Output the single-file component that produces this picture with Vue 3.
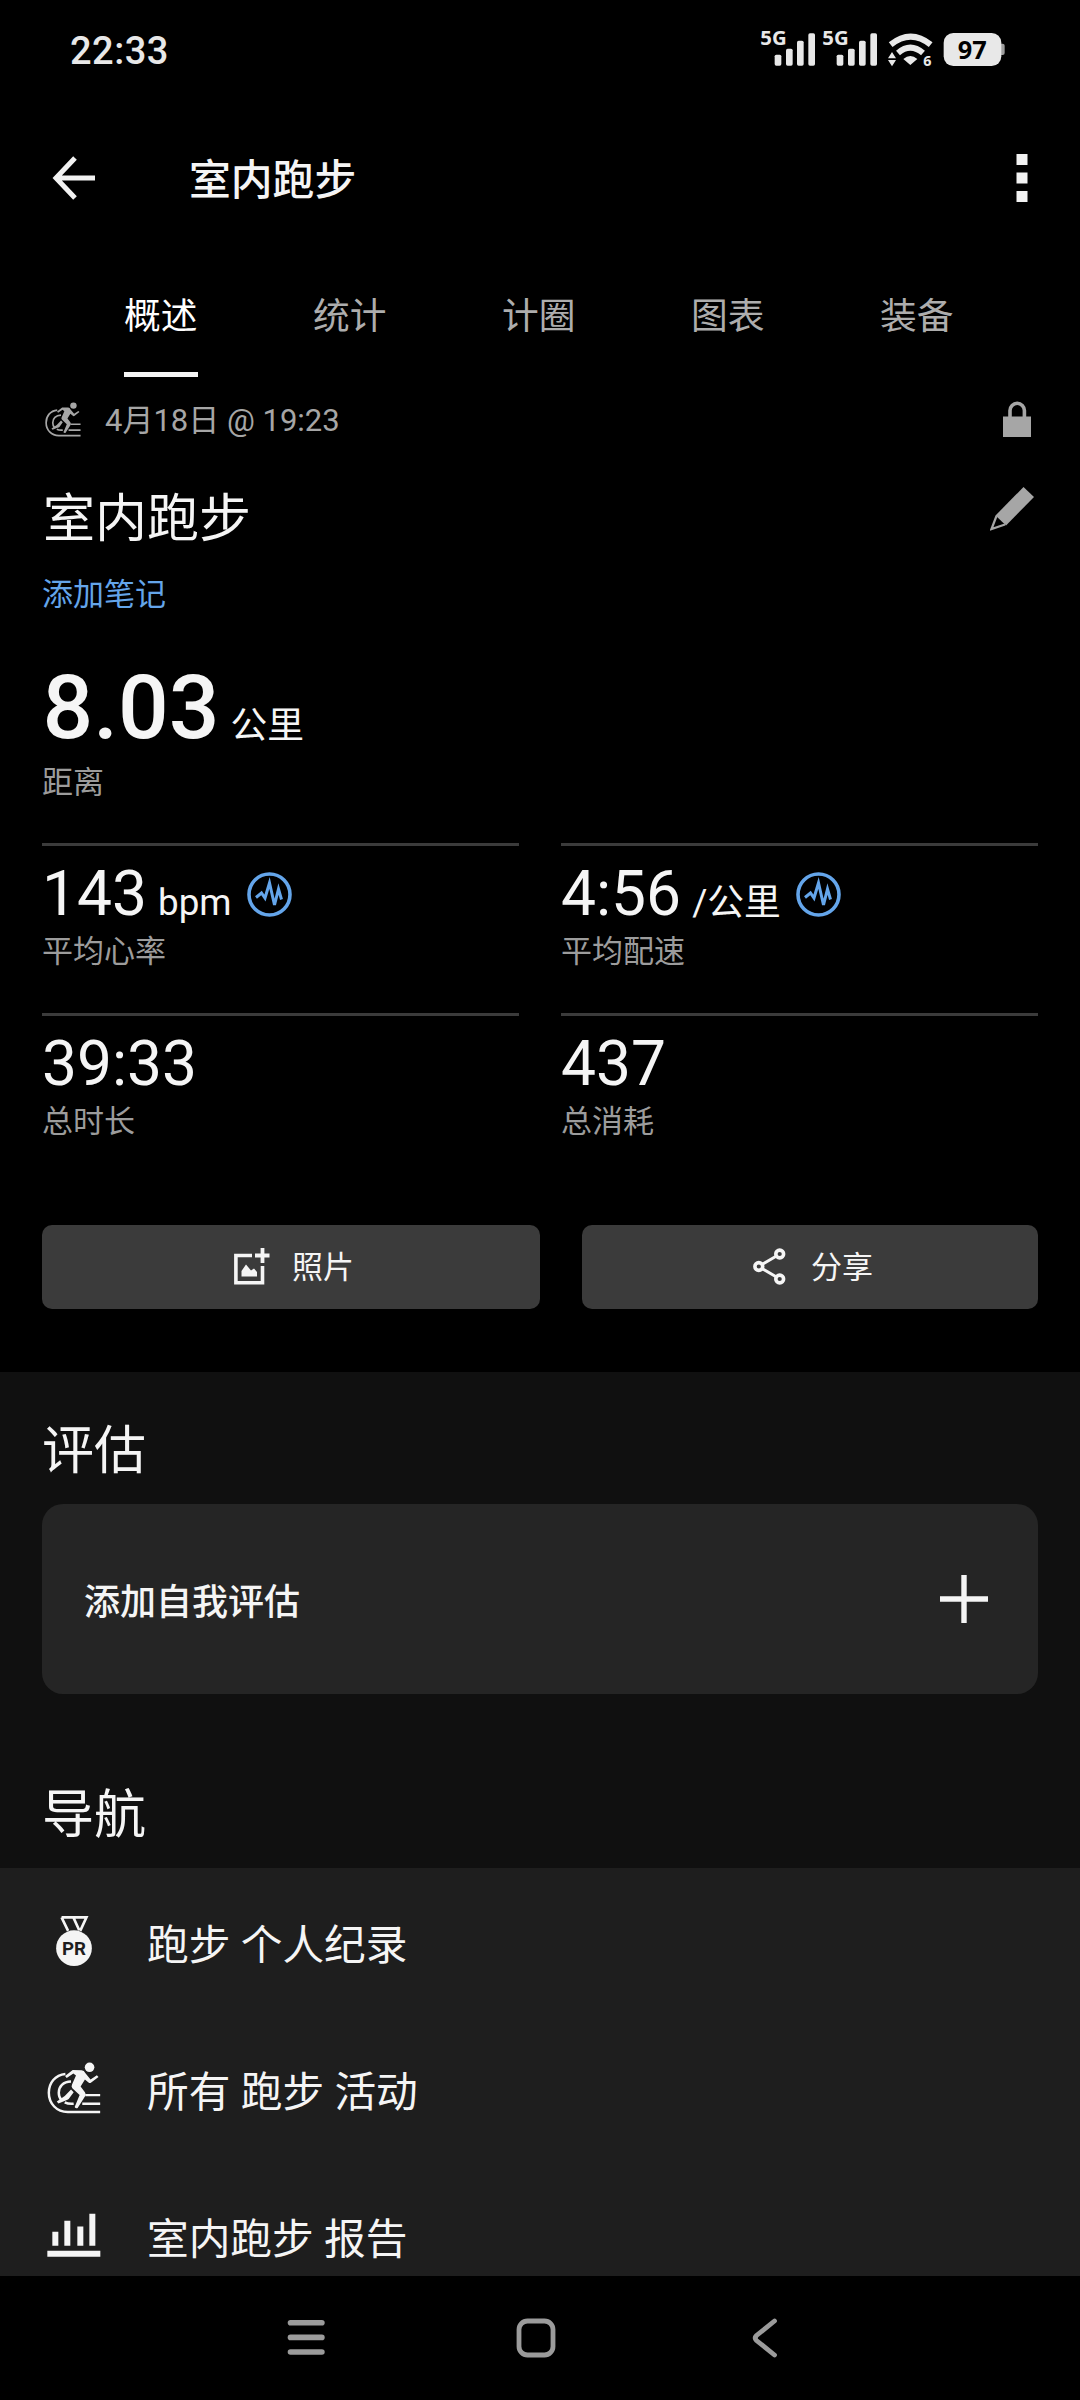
<script setup>
const tabs = ['概述', '统计', '计圈', '图表', '装备']
const stats = [
  { value: '143', unit: 'bpm', label: '平均心率', chart: true },
  { value: '4:56', unit: '/公里', label: '平均配速', chart: true },
  { value: '39:33', unit: '', label: '总时长', chart: false },
  { value: '437', unit: '', label: '总消耗', chart: false },
]
const links = [
  { icon: 'medal', text: '跑步 个人纪录' },
  { icon: 'runner', text: '所有 跑步 活动' },
  { icon: 'bars', text: '室内跑步 报告' },
]
</script>

<template>
  <div class="screen">
    <div class="status">
      <span class="clock">22:33</span>
      <svg width="280" height="80" viewBox="0 0 840 240" fill="#e8e8e8">
        <g font-family="'Noto Sans', sans-serif" font-weight="700">
          <text x="61" y="105" font-size="58" textLength="79" lengthAdjust="spacingAndGlyphs">5G</text>
          <text x="247" y="105" font-size="58" textLength="79" lengthAdjust="spacingAndGlyphs">5G</text>
          <text x="550" y="168" font-size="43">6</text>
        </g>
        <g v-for="x in [0, 186]" :key="x" :transform="`translate(${x} 0)`">
          <rect x="104" y="134" width="20" height="33" rx="5" />
          <rect x="138" y="116" width="20" height="51" rx="5" />
          <rect x="171" y="92" width="20" height="75" rx="5" />
          <rect x="205" y="70" width="20" height="97" rx="5" />
        </g>
        <g fill="none" stroke="#e8e8e8" stroke-width="18">
          <path d="M452 104Q512 56 572 104" />
          <path d="M474 129Q511 97 549 129" />
        </g>
        <path d="M490 147Q511 129 532 147L511 165ZM444 145L456 126L468 145ZM444 150H468L456 169Z" />
        <rect x="776" y="101" width="18" height="34" rx="6" fill="#9d9d9d" />
        <rect x="611" y="69" width="173" height="99" rx="29" />
        <text x="697" y="148" text-anchor="middle" font-family="'Noto Sans', sans-serif" font-weight="700" font-size="76" fill="#000">97</text>
      </svg>
    </div>

    <header class="appbar">
      <svg class="back" width="44" height="44" viewBox="0 0 44 44" fill="none" stroke="#f2f2f2" stroke-width="5">
        <path d="M23 2L4 22L23 42M4 22H43" />
      </svg>
      <h1>室内跑步</h1>
      <svg class="more" width="12" height="48" viewBox="0 0 12 48" fill="#f2f2f2">
        <path d="M.5 0h11v11H.5zM.5 18.500h11v11H.5zM.5 37h11v11H.5z" />
      </svg>
    </header>

    <nav class="tabs">
      <a v-for="(t, i) in tabs" :key="t" :class="{ active: i === 0 }">{{ t }}</a>
    </nav>

    <main class="summary">
      <div class="date-row">
        <svg class="run-small" width="36" height="35" viewBox="50 515 162 157">
          <circle cx="178" cy="531" r="14.5" fill="currentColor" />
          <g fill="none" stroke="currentColor" stroke-width="7.5">
            <path d="M105 551C74 554 55 578 55 608C55 641 79 666 112 666H210" />
            <path d="M122 574C98 574 85 590 85 608C85 618 88 625 93 630M103 637C111 641 119 642 130 641" />
            <path d="M156 641H210M165 615H210" />
          </g>
          <path fill="currentColor" d="M104 557L127 539L154 540Q162 541 165 548L181 568L200 555L205 560L182 578Q178 580 174 576L164 568L151 589L164 606Q168 612 165 618L142 654Q136 656 133 651L148 615L126 594Q122 589 125 583L137 556L129 550L109 563Z" />
          <path fill="currentColor" d="M122 598L130 606L115 627Q112 630 106 631L84 640L79 634L103 618Z" />
        </svg>
        <span>4月18日 @ 19:23</span>
        <svg class="lock" width="28" height="36" viewBox="0 0 28 36">
          <path d="M0 15.500H28V36H0z" fill="#a6a6a6" />
          <path d="M7 17V9.500a7.200 7.200 0 0 1 14.400 0V17" fill="none" stroke="#a6a6a6" stroke-width="3.600" />
        </svg>
      </div>
      <div class="title-row">
        <h2>室内跑步</h2>
        <svg width="44" height="44" viewBox="0 0 44 44">
          <path d="M33.500 0L44 10L16 38.500L5.500 28.500Z" fill="#a6a6a6" />
          <path d="M6.500 29L1.500 42L15 37.500" fill="none" stroke="#a6a6a6" stroke-width="2.200" />
        </svg>
      </div>
      <a class="note">添加笔记</a>
      <div class="distance"><b>8.03</b><span>公里</span></div>
      <div class="label">距离</div>

      <div class="grid">
        <div v-for="s in stats" :key="s.label" class="stat">
          <div class="value">
            <b>{{ s.value }}</b><span v-if="s.unit">{{ s.unit }}</span>
            <svg v-if="s.chart" width="45" height="45" viewBox="0 0 45 45" fill="none" stroke="#64a5ea">
              <circle cx="22.500" cy="22.500" r="20.500" stroke-width="3.600" />
              <path d="M9 25.500L14.500 21L18 26L22.500 11L27.500 33L31.500 17L34.500 27.500" stroke-width="3" />
            </svg>
          </div>
          <div class="label">{{ s.label }}</div>
        </div>
      </div>

      <div class="actions">
        <button class="photo">
          <svg width="36" height="37" viewBox="0 0 36 37">
            <path d="M18 7.500H1.900V34.700H28.500V18" fill="none" stroke="#f5f5f5" stroke-width="3.600" />
            <path d="M28.500 0V15M21 7.500H35.500" stroke="#f5f5f5" stroke-width="3.800" />
            <path d="M7.500 28.500V23L12 16.500L17 22.500L20 20.500L23 24V28.500Z" fill="#f5f5f5" />
          </svg>
          <span>照片</span>
        </button>
        <button class="share">
          <svg width="33" height="37" viewBox="0 0 33 37" fill="none" stroke="#f5f5f5" stroke-width="3.600">
            <circle cx="5.800" cy="18.500" r="3.900" />
            <circle cx="26.700" cy="6" r="3.900" />
            <circle cx="26.700" cy="31" r="3.900" />
            <path d="M9 16.500L23.500 8M9 20.500L23.500 29" stroke-width="3" />
          </svg>
          <span>分享</span>
        </button>
      </div>
    </main>

    <section class="lower">
      <h3 class="first">评估</h3>
      <div class="card">
        <span>添加自我评估</span>
        <svg width="48" height="48" viewBox="0 0 48 48" stroke="#f5f5f5" stroke-width="5.400">
          <path d="M24 0V48M0 24H48" />
        </svg>
      </div>
      <h3 class="second">导航</h3>
      <ul>
        <li v-for="l in links" :key="l.icon">
          <span class="icon">
            <svg v-if="l.icon === 'medal'" class="medal" viewBox="75 73 116 158">
              <circle cx="133" cy="174" r="54.5" fill="currentColor" />
              <path d="M95 80H171L152 121M95 80L115 121M131 80L149 119" fill="none" stroke="currentColor" stroke-width="8" />
              <text x="133" y="195" text-anchor="middle" font-family="Roboto, sans-serif" font-weight="700" font-size="57" fill="#1e1e1e">PR</text>
            </svg>
            <svg v-else-if="l.icon === 'runner'" class="runner" viewBox="50 515 162 157">
              <circle cx="178" cy="531" r="14.5" fill="currentColor" />
              <g fill="none" stroke="currentColor" stroke-width="7.5">
                <path d="M105 551C74 554 55 578 55 608C55 641 79 666 112 666H210" />
                <path d="M122 574C98 574 85 590 85 608C85 618 88 625 93 630M103 637C111 641 119 642 130 641" />
                <path d="M156 641H210M165 615H210" />
              </g>
              <path fill="currentColor" d="M104 557L127 539L154 540Q162 541 165 548L181 568L200 555L205 560L182 578Q178 580 174 576L164 568L151 589L164 606Q168 612 165 618L142 654Q136 656 133 651L148 615L126 594Q122 589 125 583L137 556L129 550L109 563Z" />
              <path fill="currentColor" d="M122 598L130 606L115 627Q112 630 106 631L84 640L79 634L103 618Z" />
            </svg>
            <svg v-else class="bars" viewBox="50 970 162 134">
              <path fill="currentColor" d="M66 1026h18v42H66zM102 993h18v75h-18zM141 1010h18v58h-18zM177 972h18v96h-18zM51 1083h159v18H51z" />
            </svg>
          </span>
          <span>{{ l.text }}</span>
        </li>
      </ul>
    </section>

    <footer class="sysnav">
      <svg width="38" height="36" viewBox="0 0 38 36" fill="#9b9b9b">
        <rect x=".7" width="37" height="5.600" rx="2.800" />
        <rect x=".7" y="14.600" width="37" height="5.600" rx="2.800" />
        <rect x=".7" y="29.200" width="37" height="5.600" rx="2.800" />
      </svg>
      <svg width="40" height="40" viewBox="0 0 40 40" fill="none" stroke="#9b9b9b" stroke-width="4.800">
        <rect x="3" y="3" width="34" height="34" rx="8.500" />
      </svg>
      <svg width="26" height="40" viewBox="0 0 26 40" fill="none" stroke="#9b9b9b" stroke-width="4.800" stroke-linecap="round">
        <path d="M22.500 3L4.500 17.500Q2 20 4.500 22.500L22.500 37" />
      </svg>
    </footer>
  </div>
</template>

<style>
body { margin: 0; background: #000; }
</style>

<style scoped>
.screen {
  width: 1080px;
  height: 2400px;
  overflow: hidden;
  background: #000;
  color: #f5f5f5;
  font-family: Roboto, "Noto Sans CJK SC", sans-serif;
  font-size: 31px;
}
.screen * { box-sizing: border-box; }
svg { display: block; flex: none; }
h1, h2, h3, ul { margin: 0; padding: 0; font-weight: 400; }

.status {
  display: flex;
  align-items: center;
  justify-content: space-between;
  height: 100px;
  padding: 0 60px 0 70px;
}
.clock {
  padding-top: 2px;
  font-size: 38px;
  font-weight: 500;
  letter-spacing: .5px;
  color: #e8e8e8;
}

.appbar {
  display: flex;
  align-items: center;
  height: 158px;
  padding: 0 52px 0 52px;
}
.back { margin-bottom: 2px; }
.more { margin-bottom: 3px; }
.appbar h1 {
  flex: 1;
  margin-left: 93px;
  padding-top: 4px;
  font-size: 41.8px;
  line-height: 56px;
  font-weight: 500;
}

.tabs {
  display: flex;
  gap: 115px;
  height: 119px;
  padding-left: 124px;
}
.tabs a {
  width: 74px;
  padding-top: 37px;
  border-bottom: 5px solid transparent;
  font-size: 36.750px;
  line-height: 44px;
  color: #adadad;
}
.tabs a.active { color: #fff; border-color: #f5f5f5; }

.summary { height: 995px; padding: 0 42px; }
.date-row {
  display: flex;
  align-items: center;
  height: 84px;
  color: #a6a6a6;
}
.date-row span { padding-bottom: 3px; }
.run-small { margin: 0 24px 0 3px; }
.lock { margin: 0 7px 0 auto; }
.title-row {
  display: flex;
  justify-content: space-between;
  height: 113px;
  padding: 26px 4px 0 1px;
}
h2 { padding-top: 1px; font-size: 52px; line-height: 64px; }
.note {
  display: block;
  font-size: 31px;
  line-height: 41px;
  color: #64a5ea;
}
.distance {
  display: flex;
  align-items: flex-start;
  height: 100px;
  margin-top: 43px;
  line-height: 100px;
}
.distance b { margin-left: .5px; font-size: 89.250px; font-weight: 500; }
.distance span { margin: 18px 0 0 11px; font-size: 36.750px; }
.label {
  margin-top: 5px;
  font-size: 31px;
  line-height: 40px;
  color: #9c9c9c;
}
.grid {
  display: grid;
  grid-template-columns: 477px 477px;
  column-gap: 42px;
  margin-top: 40px;
}
.stat {
  height: 170px;
  padding-top: 16px;
  border-top: 3px solid #3b3b3b;
}
.stat .label { margin-top: 6px; }
.value {
  display: flex;
  align-items: baseline;
  height: 64px;
  line-height: 64px;
}
.value b { font-size: 62.300px; font-weight: 400; }
.value span { margin-left: 11px; font-size: 36.750px; }
.value svg { align-self: flex-start; margin: 10px 0 0 15px; }

.actions {
  display: flex;
  gap: 42px;
  margin-top: 42px;
}
.actions button {
  display: flex;
  align-items: center;
  height: 84px;
  padding: 0;
  border: 0;
  border-radius: 10px;
  background: #3b3b3b;
  color: #f5f5f5;
  font-family: inherit;
  font-size: 31px;
  line-height: 40px;
}
.actions button svg { margin-bottom: 2px; }
.actions button span { padding-top: 2px; }
.actions .photo { width: 498px; padding-left: 192px; gap: 22px; }
.actions .share { width: 456px; padding-left: 171px; gap: 25px; }

.lower { height: 904px; background: #101010; }
h3 { padding-left: 42px; font-size: 52px; line-height: 64px; }
h3.first { height: 132px; padding-top: 48px; }
h3.second { height: 174px; padding-top: 90px; }
.card {
  display: flex;
  align-items: center;
  justify-content: space-between;
  height: 190px;
  margin: 0 42px;
  padding: 0 50px 0 42px;
  border-radius: 21px;
  background: #252525;
  font-size: 36px;
  font-weight: 500;
}
ul {
  height: 408px;
  overflow: hidden;
  background: #1e1e1e;
  list-style: none;
}
li {
  display: flex;
  align-items: center;
  height: 147px;
  padding: 1px 0 0 47px;
  font-size: 41.700px;
}
.icon { width: 100px; margin-bottom: 2px; }
.medal { width: 38px; height: 52px; margin: 0 0 0 8px; }
.runner { width: 54px; height: 52px; }
.bars { width: 54px; height: 45px; }

.sysnav {
  display: flex;
  align-items: center;
  height: 124px;
  padding-left: 287px;
}
.sysnav svg:nth-child(2) { margin-left: 191px; }
.sysnav svg:nth-child(3) { margin-left: 196px; }
</style>
